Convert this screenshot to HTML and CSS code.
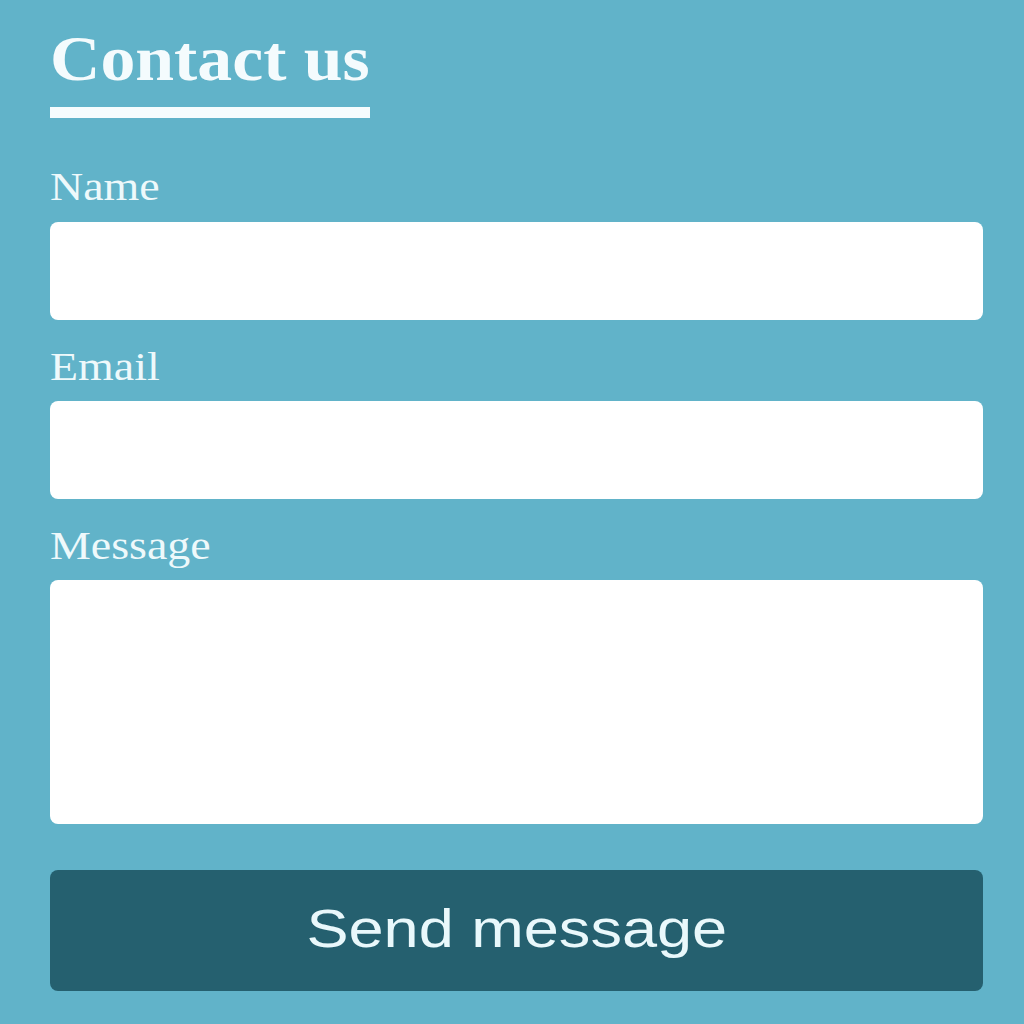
FILE: index.html
```html
<!DOCTYPE html>
<html lang="en">
<head>
<meta charset="utf-8">
<title>Contact us</title>
<link rel="stylesheet" href="styles.css">
</head>
<body>
<main class="page">
  <h1 class="title"><span class="wide title-text">Contact us</span></h1>
  <form class="form">
    <label class="label" for="name"><span class="wide label-text">Name</span></label>
    <input class="field" id="name" type="text">
    <label class="label label-next" for="email"><span class="wide label-text">Email</span></label>
    <input class="field" id="email" type="email">
    <label class="label label-next" for="message"><span class="wide label-text">Message</span></label>
    <textarea class="field area" id="message"></textarea>
    <button class="send" type="button"><span class="wide send-text">Send message</span></button>
  </form>
</main>
</body>
</html>
```
FILE: styles.css
```css
html, body {
  margin: 0;
  padding: 0;
  background: #61b3c9;
}
body {
  width: 1024px;
  height: 1024px;
  overflow: hidden;
}
.page {
  padding: 27px 41px 0 50px;
  display: flex;
  flex-direction: column;
  align-items: flex-start;
}
.wide {
  display: inline-block;
  transform-origin: left center;
  white-space: nowrap;
}
.title {
  margin: 0;
  width: 320px;
  font-family: "Liberation Serif", "Times New Roman", serif;
  font-weight: bold;
  font-size: 64px;
  line-height: 1;
  color: #f4fbfd;
  padding-bottom: 16px;
  border-bottom: 11px solid #f6fcfd;
}
.title-text {
  transform: scaleX(1.09);
}
.form {
  margin-top: 47px;
  width: 933px;
  display: flex;
  flex-direction: column;
}
.label {
  font-family: "Liberation Serif", "Times New Roman", serif;
  font-size: 41px;
  line-height: 42px;
  height: 42px;
  color: #eef9fb;
  margin-bottom: 15px;
}
.label-text {
  transform: scaleX(1.12);
}
.label-next {
  margin-top: 25px;
  margin-bottom: 14px;
}
.field {
  display: block;
  box-sizing: border-box;
  width: 100%;
  height: 98px;
  margin: 0;
  border: none;
  border-radius: 8px;
  background: #ffffff;
  padding: 10px 16px;
  font-size: 24px;
  outline: none;
}
.area {
  height: 244px;
  resize: none;
}
.send {
  margin-top: 46px;
  height: 121px;
  width: 100%;
  border: none;
  border-radius: 8px;
  background: #25606f;
  color: #e9f8fb;
  font-family: "Liberation Sans", Arial, sans-serif;
  font-size: 53px;
  padding: 0 0 4px;
  cursor: pointer;
}
.send-text {
  transform: scaleX(1.19);
  transform-origin: center center;
}
```
